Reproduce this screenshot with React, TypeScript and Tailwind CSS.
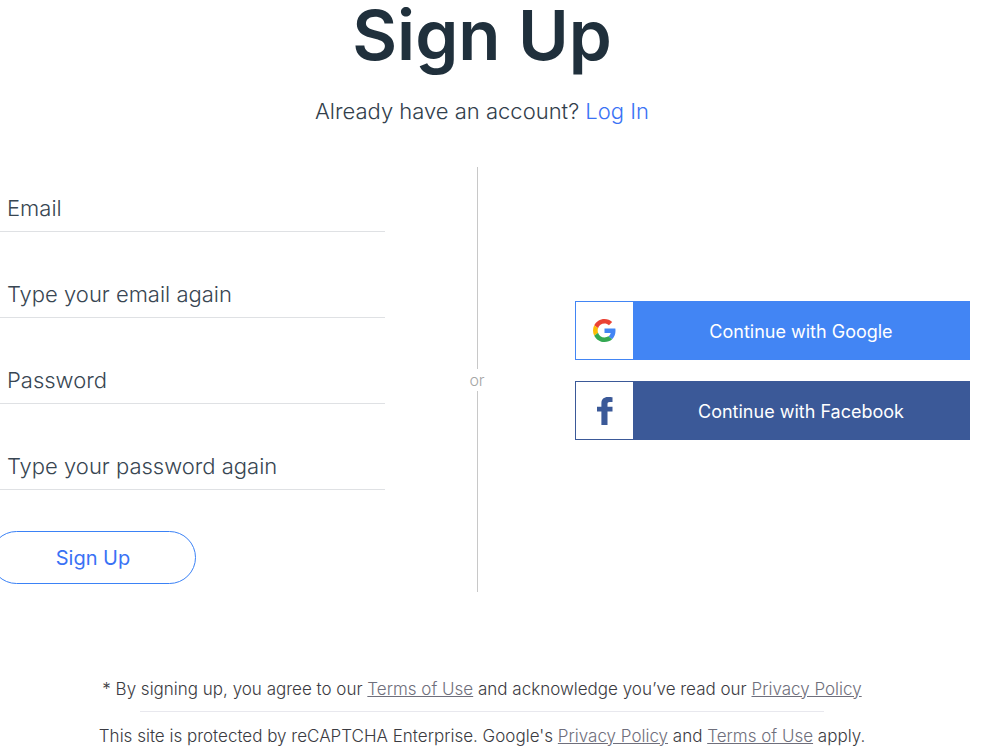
import React from "react";

const fields = [
  { id: "email", label: "Email", type: "email" },
  { id: "email-again", label: "Type your email again", type: "email" },
  { id: "password", label: "Password", type: "password" },
  { id: "password-again", label: "Type your password again", type: "password" },
];

function GoogleIcon() {
  return (
    <svg viewBox="0 0 48 48" className="size-[23px]" aria-hidden="true">
      <path fill="#EA4335" d="M24 9.5c3.54 0 6.71 1.22 9.21 3.6l6.85-6.85C35.9 2.38 30.47 0 24 0 14.62 0 6.51 5.38 2.56 13.22l7.98 6.19C12.43 13.72 17.74 9.5 24 9.5z" />
      <path fill="#4285F4" d="M46.98 24.55c0-1.57-.15-3.09-.38-4.55H24v9.02h12.94c-.58 2.96-2.26 5.48-4.78 7.18l7.73 6c4.51-4.18 7.09-10.36 7.09-17.65z" />
      <path fill="#FBBC05" d="M10.53 28.59c-.48-1.45-.76-2.99-.76-4.59s.27-3.14.76-4.59l-7.98-6.19C.92 16.46 0 20.12 0 24c0 3.88.92 7.54 2.56 10.78l7.97-6.19z" />
      <path fill="#34A853" d="M24 48c6.48 0 11.93-2.13 15.89-5.81l-7.73-6c-2.15 1.45-4.92 2.3-8.16 2.3-6.26 0-11.57-4.22-13.47-9.91l-7.98 6.19C6.51 42.62 14.62 48 24 48z" />
    </svg>
  );
}

function FacebookIcon() {
  return (
    <svg viewBox="0 0 16 28" className="h-7 w-4" fill="#3b5998" aria-hidden="true">
      <path d="M15.5 0.2v4.8h-2.700c-2 0-2.300.9-2.300 2.300v2.500h5v4.800h-5V28H4.400V14.600H0V9.800h4.400V6.200C4.400 2.200 6.900 0 10.900 0c1.900 0 3.900.1 4.600.2z" />
    </svg>
  );
}

export default function App() {
  return (
    <main className="bg-white font-['Inter','Liberation_Sans',sans-serif] text-[#20303c]">
      <div className="-ml-2.5 pr-[30px]">
        <header className="pl-1 text-center">
          <h1 className="text-[69px] leading-[70px] font-semibold">Sign Up</h1>
          <p className="mt-6 text-[22px] leading-[34px] font-light text-[#32404c]">
            Already have an account?{" "}
            <a href="#login" className="text-[#3a72f5]">Log In</a>
          </p>
        </header>

        <div className="mt-[39px] flex">
          <form className="flex-1 pt-px" onSubmit={(e) => e.preventDefault()}>
            {fields.map((f) => (
              <div key={f.id} className="grid h-[86px] content-end first:h-16">
                <label
                  htmlFor={f.id}
                  className="col-start-1 row-start-1 self-center pl-[17px] text-[22px] leading-7 font-light text-[#384652]"
                >
                  {f.label}
                </label>
                <input
                  id={f.id}
                  type={f.type}
                  className="col-start-1 row-start-1 h-12 w-full border-b border-[#dfe1e4] bg-transparent pl-[17px] text-[22px] font-light text-[#32404c] outline-none"
                />
              </div>
            ))}
            <button
              type="submit"
              className="mt-[41px] h-[53px] w-[206px] rounded-full border border-[#3b82f6] text-xl font-normal text-[#3a72f5]"
            >
              Sign Up
            </button>
          </form>

          <div className="flex h-[425px] w-[190px] flex-col items-center pr-1.5">
            <div className="w-px flex-1 bg-[#c8c8c8]" />
            <span className="text-base leading-[22px] font-light text-[#a6a6a6]">or</span>
            <div className="w-px flex-1 bg-[#c8c8c8]" />
          </div>

          <div className="flex flex-1 flex-col gap-[21px] pt-[134px]">
            <button type="button" className="flex h-[59px] items-stretch border border-[#4285f4] bg-[#4285f4] text-lg font-normal text-white">
              <span className="flex w-[57px] items-center justify-center bg-white">
                <GoogleIcon />
              </span>
              <span className="flex flex-1 items-center justify-center pt-0.5">Continue with Google</span>
            </button>
            <button type="button" className="flex h-[59px] items-stretch border border-[#3b5998] bg-[#3b5998] text-lg font-normal text-white">
              <span className="flex w-[57px] items-center justify-center bg-white">
                <FacebookIcon />
              </span>
              <span className="flex flex-1 items-center justify-center pt-0.5">Continue with Facebook</span>
            </button>
          </div>
        </div>

        <footer className="mt-[85px] pl-1 text-center text-[17px] leading-6 font-light text-[#3b3b42]">
          <p>
            * By signing up, you agree to our{" "}
            <a href="#terms" className="text-[#6f6f7c] underline">Terms of Use</a> and acknowledge you’ve read our{" "}
            <a href="#privacy" className="text-[#6f6f7c] underline">Privacy Policy</a>
          </p>
          <hr className="mx-auto mt-2.5 mb-3 w-[70%] border-[#e8e8ee]" />
          <p>
            This site is protected by reCAPTCHA Enterprise. Google's{" "}
            <a href="#google-privacy" className="text-[#6f6f7c] underline">Privacy Policy</a> and{" "}
            <a href="#google-terms" className="text-[#6f6f7c] underline">Terms of Use</a> apply.
          </p>
        </footer>
      </div>
    </main>
  );
}
